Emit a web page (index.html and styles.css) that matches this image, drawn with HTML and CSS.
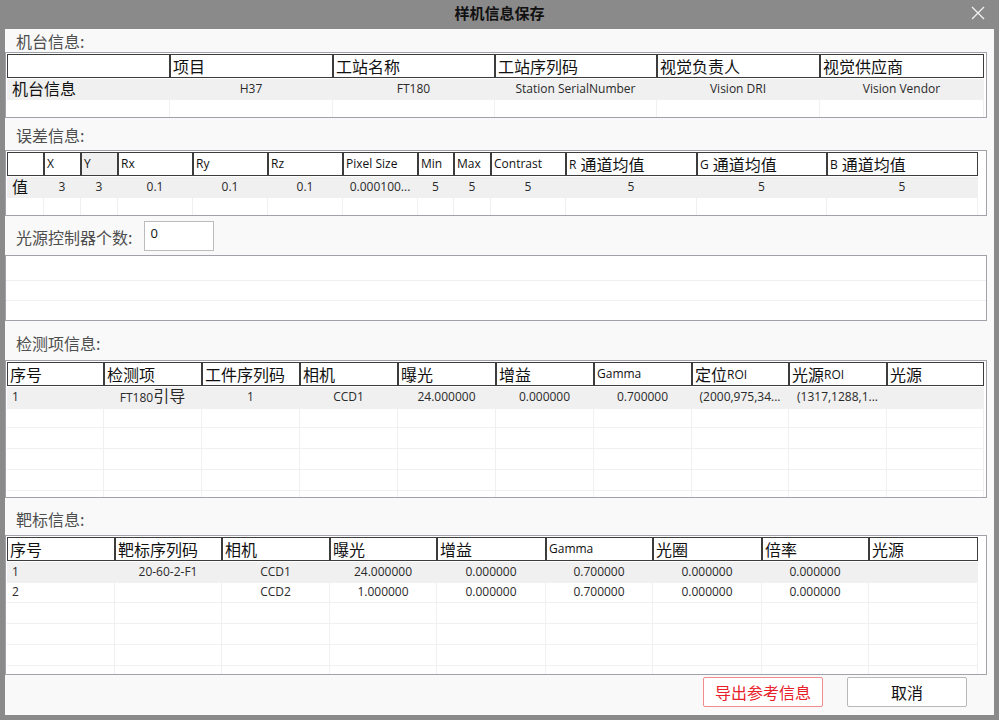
FILE: index.html
```html
<!DOCTYPE html>
<html lang="zh-CN">
<head>
<meta charset="utf-8">
<title>样机信息保存</title>
<link rel="stylesheet" href="styles.css">
</head>
<body>
<div class="window">
  <div class="titlebar">
    <span class="title">样机信息保存</span>
    <svg class="close" width="14" height="14" viewBox="0 0 14 14"><path d="M1 1L13 13M13 1L1 13" stroke="#f2f2f2" stroke-width="1.3" fill="none"/></svg>
  </div>
  <div class="panel">
    <div class="label l1">机台信息:</div>
    <div class="tbl t1">
      <div class="hdr c1">
        <div class="hc"></div><div class="hc">项目</div><div class="hc">工站名称</div><div class="hc">工站序列码</div><div class="hc">视觉负责人</div><div class="hc">视觉供应商</div>
      </div>
      <div class="row c1 sel">
        <div class="dc big left">机台信息</div><div class="dc">H37</div><div class="dc">FT180</div><div class="dc">Station SerialNumber</div><div class="dc">Vision DRI</div><div class="dc">Vision Vendor</div>
      </div>
      <div class="row c1">
        <div class="dc"></div><div class="dc"></div><div class="dc"></div><div class="dc"></div><div class="dc"></div><div class="dc"></div>
      </div>
    </div>

    <div class="label l2">误差信息:</div>
    <div class="tbl t2">
      <div class="hdr c2">
        <div class="hc"></div><div class="hc lt">X</div><div class="hc lt grayh">Y</div><div class="hc lt">Rx</div><div class="hc lt">Ry</div><div class="hc lt">Rz</div><div class="hc lt">Pixel Size</div><div class="hc lt">Min</div><div class="hc lt">Max</div><div class="hc lt">Contrast</div><div class="hc"><span class="s sp">R</span>通道均值</div><div class="hc"><span class="s sp">G</span>通道均值</div><div class="hc"><span class="s sp">B</span>通道均值</div>
      </div>
      <div class="row c2 sel">
        <div class="dc big left">值</div><div class="dc">3</div><div class="dc">3</div><div class="dc">0.1</div><div class="dc">0.1</div><div class="dc">0.1</div><div class="dc">0.000100...</div><div class="dc">5</div><div class="dc">5</div><div class="dc">5</div><div class="dc">5</div><div class="dc">5</div><div class="dc">5</div>
      </div>
      <div class="row c2">
        <div class="dc"></div><div class="dc"></div><div class="dc"></div><div class="dc"></div><div class="dc"></div><div class="dc"></div><div class="dc"></div><div class="dc"></div><div class="dc"></div><div class="dc"></div><div class="dc"></div><div class="dc"></div><div class="dc"></div>
      </div>
    </div>

    <div class="lightrow">
      <span class="label inl">光源控制器个数:</span>
      <div class="input">0</div>
    </div>
    <div class="lightbox">
      <div class="lline"></div>
      <div class="lline"></div>
    </div>

    <div class="label l3">检测项信息:</div>
    <div class="tbl t3">
      <div class="hdr c3">
        <div class="hc">序号</div><div class="hc">检测项</div><div class="hc">工件序列码</div><div class="hc">相机</div><div class="hc">曝光</div><div class="hc">增益</div><div class="hc lt">Gamma</div><div class="hc">定位<span class="s">ROI</span></div><div class="hc">光源<span class="s">ROI</span></div><div class="hc">光源</div>
      </div>
      <div class="row c3 sel">
        <div class="dc left">1</div><div class="dc">FT180<span class="cj">引导</span></div><div class="dc">1</div><div class="dc">CCD1</div><div class="dc">24.000000</div><div class="dc">0.000000</div><div class="dc">0.700000</div><div class="dc">(2000,975,34...</div><div class="dc">(1317,1288,1...</div><div class="dc"></div>
      </div>
      <div class="row c3"><div class="dc"></div><div class="dc"></div><div class="dc"></div><div class="dc"></div><div class="dc"></div><div class="dc"></div><div class="dc"></div><div class="dc"></div><div class="dc"></div><div class="dc"></div></div>
      <div class="row c3"><div class="dc"></div><div class="dc"></div><div class="dc"></div><div class="dc"></div><div class="dc"></div><div class="dc"></div><div class="dc"></div><div class="dc"></div><div class="dc"></div><div class="dc"></div></div>
      <div class="row c3"><div class="dc"></div><div class="dc"></div><div class="dc"></div><div class="dc"></div><div class="dc"></div><div class="dc"></div><div class="dc"></div><div class="dc"></div><div class="dc"></div><div class="dc"></div></div>
      <div class="row c3"><div class="dc"></div><div class="dc"></div><div class="dc"></div><div class="dc"></div><div class="dc"></div><div class="dc"></div><div class="dc"></div><div class="dc"></div><div class="dc"></div><div class="dc"></div></div>
      <div class="row c3"><div class="dc"></div><div class="dc"></div><div class="dc"></div><div class="dc"></div><div class="dc"></div><div class="dc"></div><div class="dc"></div><div class="dc"></div><div class="dc"></div><div class="dc"></div></div>
    </div>

    <div class="label l4">靶标信息:</div>
    <div class="tbl t4">
      <div class="hdr c4">
        <div class="hc">序号</div><div class="hc">靶标序列码</div><div class="hc">相机</div><div class="hc">曝光</div><div class="hc">增益</div><div class="hc lt">Gamma</div><div class="hc">光圈</div><div class="hc">倍率</div><div class="hc">光源</div>
      </div>
      <div class="row c4 sel">
        <div class="dc left">1</div><div class="dc">20-60-2-F1</div><div class="dc">CCD1</div><div class="dc">24.000000</div><div class="dc">0.000000</div><div class="dc">0.700000</div><div class="dc">0.000000</div><div class="dc">0.000000</div><div class="dc"></div>
      </div>
      <div class="row c4">
        <div class="dc left">2</div><div class="dc"></div><div class="dc">CCD2</div><div class="dc">1.000000</div><div class="dc">0.000000</div><div class="dc">0.700000</div><div class="dc">0.000000</div><div class="dc">0.000000</div><div class="dc"></div>
      </div>
      <div class="row c4"><div class="dc"></div><div class="dc"></div><div class="dc"></div><div class="dc"></div><div class="dc"></div><div class="dc"></div><div class="dc"></div><div class="dc"></div><div class="dc"></div></div>
      <div class="row c4"><div class="dc"></div><div class="dc"></div><div class="dc"></div><div class="dc"></div><div class="dc"></div><div class="dc"></div><div class="dc"></div><div class="dc"></div><div class="dc"></div></div>
      <div class="row c4"><div class="dc"></div><div class="dc"></div><div class="dc"></div><div class="dc"></div><div class="dc"></div><div class="dc"></div><div class="dc"></div><div class="dc"></div><div class="dc"></div></div>
      <div class="row c4"><div class="dc"></div><div class="dc"></div><div class="dc"></div><div class="dc"></div><div class="dc"></div><div class="dc"></div><div class="dc"></div><div class="dc"></div><div class="dc"></div></div>
    </div>

    <div class="buttons">
      <div class="btn export">导出参考信息</div>
      <div class="btn cancel">取消</div>
    </div>
  </div>
</div>
</body>
</html>
```

FILE: styles.css
```css
* { box-sizing: border-box; }
html, body {
  margin: 0;
  padding: 0;
  background: #8a8a8a;
  font-family: "Open Sans", "Noto Sans CJK SC", sans-serif;
}
.window {
  width: 999px;
  height: 720px;
  background: #8a8a8a;
  display: flex;
  flex-direction: column;
}
.titlebar {
  height: 29px;
  position: relative;
  display: flex;
  align-items: center;
  justify-content: center;
}
.title {
  font-family: "Noto Sans CJK SC", sans-serif;
  font-weight: bold;
  font-size: 15px;
  color: #111;
  margin-top: -4px;
}
.close {
  position: absolute;
  right: 14px;
  top: 6px;
}
.panel {
  margin: 0 5px 5px 5px;
  width: 989px;
  height: 686px;
  background: #f9f9f9;
  display: flex;
  flex-direction: column;
}
.label {
  font-family: "Noto Sans CJK SC", sans-serif;
  font-size: 16px;
  color: #4e4e4e;
  padding-left: 11px;
  display: flex;
  align-items: center;
}
.l1 { height: 23px; }
.l2 { height: 32px; padding-top: 1px; }
.l3 { height: 39px; padding-top: 5px; }
.l4 { height: 37px; padding-top: 4px; }
.tbl {
  width: 982px;
  border: 1px solid #9fa2a8;
  background: #fff;
  padding: 1px;
  overflow: hidden;
}
.t1 { height: 66px; }
.t2 { height: 66px; }
.t3 { height: 138px; }
.t4 { height: 140px; }
.hdr, .row { display: grid; }
.c1 { grid-template-columns: 163px 163px 162px 162px 163px 164px; }
.c2 { grid-template-columns: 37px 37px 37px 75px 75px 75px 75px 36px 37px 75px 131px 130px 151px; }
.c3 { grid-template-columns: 97px 98px 98px 98px 98px 98px 98px 97px 98px 97px; }
.c4 { grid-template-columns: 108px 107px 108px 107px 109px 107px 109px 107px 109px; }
.hdr { height: 24px; }
.hc {
  border: 1px solid #3c3c3c;
  font-family: "Noto Sans CJK SC", sans-serif;
  font-size: 16px;
  color: #111;
  padding-left: 2px;
  display: flex;
  align-items: center;
  white-space: nowrap;
  overflow: hidden;
  line-height: 1;
  background: #fff;
}
.hc.lt { font-family: "Open Sans", sans-serif; font-size: 12px; }
.hc .s { font-family: "Open Sans", sans-serif; font-size: 12px; margin-top: 2px; }
.hc .s.sp { margin-right: 4px; }
.hc.grayh { background: #f0f0f0; }
.row { height: 21px; }
.row.sel { height: 20px; margin-top: 1px; }
.dc {
  border-right: 1px solid #f0f0f0;
  border-bottom: 1px solid #f0f0f0;
  font-size: 12px;
  color: #2a2a2a;
  text-align: center;
  line-height: 20px;
  white-space: nowrap;
  overflow: visible;
}
.row.sel .dc { background: #f0f0f0; border-color: #f0f0f0; }
.dc.left { text-align: left; padding-left: 5px; }
.dc.big {
  font-family: "Noto Sans CJK SC", sans-serif;
  font-size: 16px;
  font-weight: normal;
  color: #111;
  padding-left: 5px;
  line-height: 19px;
}
.dc .cj { font-family: "Noto Sans CJK SC", sans-serif; font-size: 16px; line-height: 1; }
.lightrow {
  height: 39px;
  display: flex;
  align-items: flex-start;
}
.label.inl { height: 30px; margin-top: 6px; padding-left: 11px; }
.input {
  margin-top: 5px;
  margin-left: 12px;
  width: 70px;
  height: 30px;
  background: #fff;
  border: 1px solid #bcbcbc;
  font-size: 13px;
  color: #111;
  padding: 2px 5px;
}
.lightbox {
  width: 982px;
  height: 66px;
  border: 1px solid #9fa2a8;
  background: #fff;
  padding-top: 24px;
}
.lline {
  height: 20px;
  border-top: 1px solid #f0f0f0;
}
.buttons {
  display: flex;
  justify-content: flex-end;
  gap: 24px;
  padding-top: 2px;
  padding-right: 27px;
}
.btn {
  width: 120px;
  height: 30px;
  border-radius: 2px;
  display: flex;
  align-items: center;
  justify-content: center;
  font-family: "Noto Sans CJK SC", sans-serif;
  font-size: 16px;
  background: #fff;
}
.export { border: 1px solid #f28b8b; color: #e8202a; }
.cancel { border: 1px solid #b8b8b8; color: #111; }
```
